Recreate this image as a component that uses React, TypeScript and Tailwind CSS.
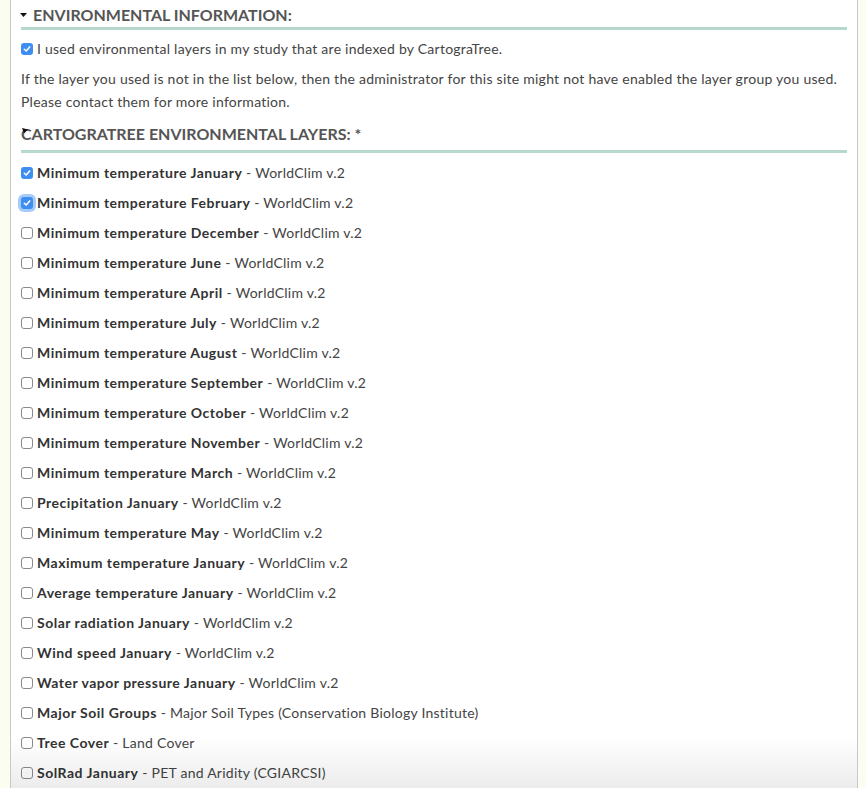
import React from "react";

const items: { name: string; src: string; checked?: boolean; focus?: boolean }[] = [
  { name: "Minimum temperature January", src: "WorldClim v.2", checked: true },
  { name: "Minimum temperature February", src: "WorldClim v.2", checked: true, focus: true },
  { name: "Minimum temperature December", src: "WorldClim v.2" },
  { name: "Minimum temperature June", src: "WorldClim v.2" },
  { name: "Minimum temperature April", src: "WorldClim v.2" },
  { name: "Minimum temperature July", src: "WorldClim v.2" },
  { name: "Minimum temperature August", src: "WorldClim v.2" },
  { name: "Minimum temperature September", src: "WorldClim v.2" },
  { name: "Minimum temperature October", src: "WorldClim v.2" },
  { name: "Minimum temperature November", src: "WorldClim v.2" },
  { name: "Minimum temperature March", src: "WorldClim v.2" },
  { name: "Precipitation January", src: "WorldClim v.2" },
  { name: "Minimum temperature May", src: "WorldClim v.2" },
  { name: "Maximum temperature January", src: "WorldClim v.2" },
  { name: "Average temperature January", src: "WorldClim v.2" },
  { name: "Solar radiation January", src: "WorldClim v.2" },
  { name: "Wind speed January", src: "WorldClim v.2" },
  { name: "Water vapor pressure January", src: "WorldClim v.2" },
  { name: "Major Soil Groups", src: "Major Soil Types (Conservation Biology Institute)" },
  { name: "Tree Cover", src: "Land Cover" },
  { name: "SolRad January", src: "PET and Aridity (CGIARCSI)" },
];

function Box({ checked, focus }: { checked?: boolean; focus?: boolean }) {
  if (checked) {
    return (
      <span
        className={
          "inline-flex h-[12px] w-[12px] shrink-0 items-center justify-center rounded-[3px] bg-[#3d8ef0] " +
          (focus ? "shadow-[0_0_0_3px_rgba(90,160,245,0.55)]" : "")
        }
      >
        <svg width="8" height="8" viewBox="0 0 8 8" fill="none">
          <path d="M1.3 4.2 L3.2 6 L6.7 1.9" stroke="white" strokeWidth="1.5" strokeLinecap="round" strokeLinejoin="round" />
        </svg>
      </span>
    );
  }
  return <span className="inline-block h-[12px] w-[12px] shrink-0 rounded-[3px] border border-[#8a8a8a] bg-white" />;
}

export default function App() {
  return (
    <div className="relative flex min-h-screen bg-[#fafdf0] font-['Lato',sans-serif] text-[#444]">
      <div className="w-[10px] shrink-0" />
      <div className="w-[848px] shrink-0 border-x border-[#c8c8c8] bg-white px-[10px] pb-10">
        <div className="mt-[5px] flex items-center border-b-[3px] border-[#b7d8cc] pb-[2px] text-[16px] font-bold leading-[20px] text-[#555]">
          <svg width="7" height="5" viewBox="0 0 7 5" className="ml-[-1px] mr-[6px]">
            <path d="M0 0 L7 0 L3.5 4 Z" fill="#111" />
          </svg>
          ENVIRONMENTAL INFORMATION:
        </div>
        <div className="mt-[9px] flex items-center gap-[4px] text-[14px] leading-[20px] tracking-[0.25px]">
          <Box checked />
          <span>I used environmental layers in my study that are indexed by CartograTree.</span>
        </div>
        <p className="mt-[8px] text-[14px] leading-[23px] tracking-[0.25px]">
          If the layer you used is not in the list below, then the administrator for this site might not have enabled
          the layer group you used. Please contact them for more information.
        </p>
        <div className="relative mt-[11px] border-b-[3px] border-[#b7d8cc] pb-[6px] text-[16px] font-bold leading-[20px] text-[#555]">
          <svg width="7" height="6" viewBox="0 0 7 6" className="absolute left-[1px] top-[4px]">
            <path d="M0 0 L6 1.5 L2 5.5 Z" fill="#111" />
          </svg>
          CARTOGRATREE ENVIRONMENTAL LAYERS: *
        </div>
        <div className="mt-[10px] flex flex-col gap-[10px]">
          {items.map((it, i) => (
            <div key={i} className="flex items-center gap-[4px] text-[14px] leading-[20px] tracking-[0.25px]">
              <Box checked={it.checked} focus={it.focus} />
              <span>
                <span className="font-bold tracking-[0.5px] text-[#333]">{it.name}</span>
                <span> - {it.src}</span>
              </span>
            </div>
          ))}
        </div>
      </div>
      <div className="flex-1" />
      <div className="pointer-events-none fixed bottom-0 left-[11px] h-[50px] w-[846px] bg-gradient-to-b from-white to-[#ececec] mix-blend-multiply" />
    </div>
  );
}
